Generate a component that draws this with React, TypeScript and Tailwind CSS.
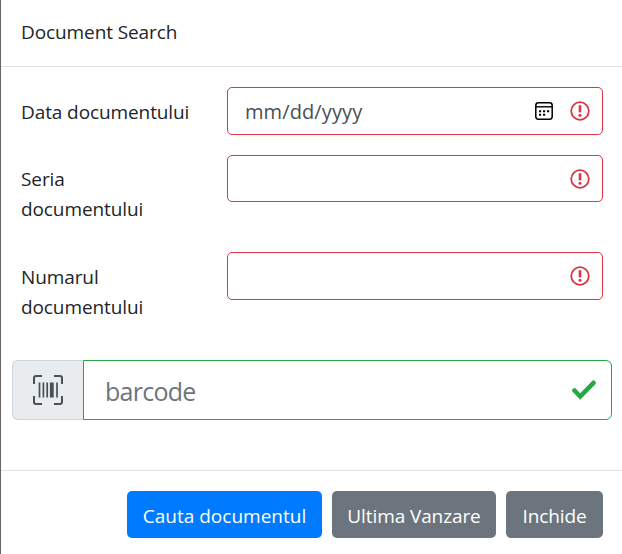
import type { ReactNode } from "react";

function InvalidIcon() {
  return (
    <svg className="size-5 shrink-0" viewBox="0 0 20 20" fill="none" stroke="#dc3545">
      <circle cx="10" cy="10" r="8.8" strokeWidth="1.8" />
      <path d="M10 4.2v7.2" strokeWidth="2.6" />
      <circle cx="10" cy="14.2" r="1.5" fill="#dc3545" stroke="none" />
    </svg>
  );
}

function CalendarIcon() {
  return (
    <svg className="h-[18px] w-[18px]" viewBox="0 0 18 18" fill="none" stroke="#000">
      <rect x="0.8" y="0.8" width="16.4" height="16.4" rx="2.6" strokeWidth="1.5" />
      <path d="M1 4.8h16" strokeWidth="1.4" />
      <path d="M4 9.2h2.2M8 9.2h2.2M12 9.2h2.2M4 12.8h2.2M8 12.8h2.2" strokeWidth="2.1" />
    </svg>
  );
}

function BarcodeIcon() {
  return (
    <svg className="h-[30px] w-[30px]" viewBox="0 0 30 30" fill="none" stroke="#495057">
      <path
        d="M1 9V3q0-2 2-2h6M21 1h6q2 0 2 2v6M29 21v6q0 2-2 2h-6M9 29H3q-2 0-2-2v-6"
        strokeWidth="2"
      />
      <path d="M6.5 7.5v15M10.4 7.5v15M14.2 7.5v15M24 7.5v15" strokeWidth="1.7" />
      <path d="M18.8 7.5v15" strokeWidth="3.8" />
    </svg>
  );
}

function Field({ label, className, children }: { label: ReactNode; className: string; children: ReactNode }) {
  return (
    <div className={`flex items-start ${className}`}>
      <label className="w-[206px] leading-[30px] tracking-[-0.1px]">{label}</label>
      <div className="flex h-full flex-1 items-center rounded-[5px] border border-[#dc3545] bg-white pr-3 pl-[17px]">
        {children}
        <InvalidIcon />
      </div>
    </div>
  );
}

export default function App() {
  return (
    <div className="flex h-[554px] w-[622px] flex-col overflow-hidden border-l border-[#666] bg-white font-['Open_Sans','Noto_Sans',sans-serif] text-[19px] text-[#212529]">
      <header className="h-[67px] shrink-0 border-b border-[#dee2e6] pt-[17px] pl-5 leading-[30px]">
        <span className="tracking-[-0.1px]">Document Search</span>
      </header>
      <main className="h-[403px] shrink-0 pt-5">
        <div className="pr-[19px] pl-5">
          <Field className="h-12" label={<span className="block pt-[10px]">Data documentului</span>}>
            <span className="pt-px text-[20px] tracking-[0.1px] text-[#495057]">mm/dd/yyyy</span>
            <span className="mr-[17px] ml-auto">
              <CalendarIcon />
            </span>
          </Field>
          <Field className="mt-5 h-[47px]" label={<span className="block pt-[9px]">Seria<br />documentului</span>}>
            <span className="flex-1" />
          </Field>
          <Field className="mt-[50px] h-12" label={<span className="block pt-[10px]">Numarul<br />documentului</span>}>
            <span className="flex-1" />
          </Field>
        </div>
        <div className="mt-[60px] mr-[10px] ml-[11px] flex h-[60px]">
          <div className="flex w-[71px] items-center justify-center rounded-l-[6px] border border-r-0 border-[#ced4da] bg-[#e9ecef]">
            <BarcodeIcon />
          </div>
          <div className="flex flex-1 items-center rounded-r-[6px] border border-[#28a745] pr-[15px] pl-[21px]">
            <span className="pt-[3px] text-[25px] tracking-[-0.75px] text-[#6c757d]">barcode</span>
            <svg className="ml-auto h-[20px] w-[24px]" viewBox="0 0 24 20" fill="none">
              <path d="M2.5 10.5l5.7 6L21.5 2.8" stroke="#28a745" strokeWidth="4.6" strokeLinecap="round" />
            </svg>
          </div>
        </div>
      </main>
      <footer className="flex flex-1 items-start justify-end gap-[10px] border-t border-[#dee2e6] pt-5 pr-[19px] text-white">
        <button className="h-[47px] w-[195px] rounded-[5px] bg-[#007bff] pt-[3px]">Cauta documentul</button>
        <button className="h-[47px] w-[164px] rounded-[5px] bg-[#6c757d] pt-[3px] tracking-[-0.1px]">Ultima Vanzare</button>
        <button className="h-[47px] w-[97px] rounded-[5px] bg-[#6c757d] pt-[3px] tracking-[-0.1px]">Inchide</button>
      </footer>
    </div>
  );
}
